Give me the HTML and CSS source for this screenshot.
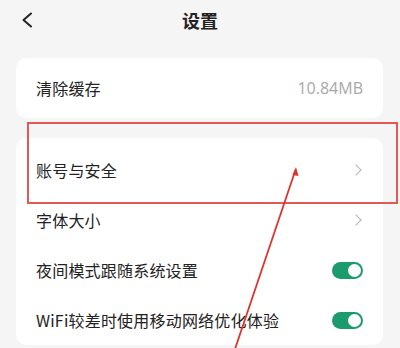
FILE: index.html
```html
<!DOCTYPE html>
<html lang="zh-CN">
<head>
    <meta charset="UTF-8">
    <meta name="viewport" content="width=device-width, initial-scale=1.0">
    <title>设置</title>
    <link rel="stylesheet" href="styles.css">
</head>
<body>
<header class="topbar">
    <svg class="back" width="12" height="16" viewBox="0 0 12 16">
        <path d="M10 1.5 L2.5 8 L10 14.5" fill="none" stroke="#222" stroke-width="2" stroke-linecap="round" stroke-linejoin="round"/>
    </svg>
    <h1>设置</h1>
</header>

<div class="card">
    <div class="row">
        <span class="label">清除缓存</span>
        <span class="value">10.84MB</span>
    </div>
</div>

<div class="card card-list">
    <div class="row">
        <span class="label">账号与安全</span>
        <span class="chevron"></span>
    </div>
    <div class="row">
        <span class="label">字体大小</span>
        <span class="chevron"></span>
    </div>
    <div class="row">
        <span class="label">夜间模式跟随系统设置</span>
        <span class="switch on"></span>
    </div>
    <div class="row">
        <span class="label">WiFi较差时使用移动网络优化体验</span>
        <span class="switch on"></span>
    </div>
</div>

<!-- annotation overlay -->
<div class="mark-box"></div>
<svg class="mark-arrow" width="400" height="348" viewBox="0 0 400 348">
    <line x1="295.5" y1="170" x2="234" y2="352" stroke="#d8362e" stroke-width="1.8"/>
    <path d="M296 167 L292.5 175 L298.5 176 Z" fill="#d8362e"/>
</svg>
</body>
</html>
```

FILE: styles.css
```css
body {
    margin: 0;
    background-color: #f5f5f5;
    font-family: "Noto Sans CJK SC", "Noto Sans", sans-serif;
    color: #222;
    width: 400px;
    height: 348px;
    overflow: hidden;
    position: relative;
}

.topbar {
    height: 40px;
    display: flex;
    align-items: center;
    justify-content: center;
    position: relative;
}

.back {
    position: absolute;
    left: 21px;
    top: 12px;
}

h1 {
    margin: 0;
    font-size: 18px;
    font-weight: 600;
    line-height: 40px;
}

.card {
    background-color: #fff;
    border-radius: 10px;
    margin: 18px 17px 0 16px;
}

.card-list {
    margin-top: 20px;
    padding-top: 7px;
}

.row {
    height: 50px;
    display: flex;
    align-items: center;
    justify-content: space-between;
    padding: 0 20px;
    font-size: 16px;
}

.label {
    letter-spacing: 0.2px;
}

.card > .row:only-child {
    height: 60px;
}

.value {
    color: #a8a8a8;
    font-family: "Open Sans", "Noto Sans", sans-serif;
    font-size: 16px;
}

.chevron {
    width: 7px;
    height: 7px;
    border-top: 1.3px solid #b5b5b5;
    border-right: 1.3px solid #b5b5b5;
    transform: rotate(45deg);
    margin-right: 3px;
}

.switch {
    width: 31px;
    height: 17px;
    border-radius: 9px;
    background-color: #1c9b6c;
    position: relative;
}

.switch.on::after {
    content: "";
    position: absolute;
    right: 2px;
    top: 2px;
    width: 13px;
    height: 13px;
    border-radius: 50%;
    background-color: #fff;
}

.mark-box {
    position: absolute;
    left: 27px;
    top: 122px;
    width: 367px;
    height: 78px;
    border: 2px solid #de5a52;
}

.mark-arrow {
    position: absolute;
    left: 0;
    top: 0;
}
```
